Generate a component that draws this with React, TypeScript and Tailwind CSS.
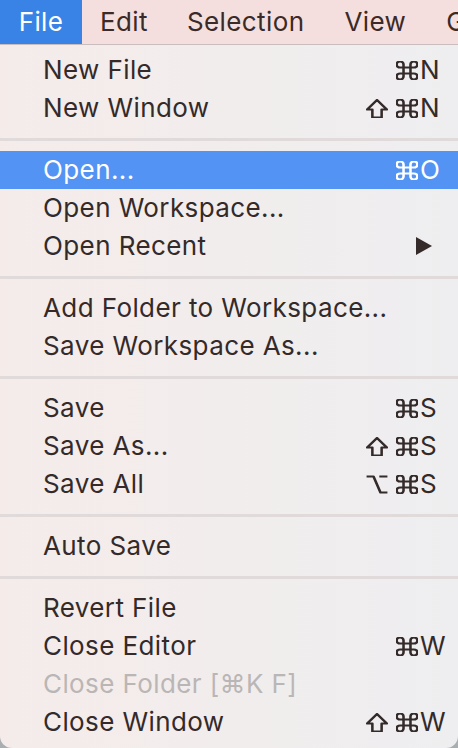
import { ReactNode } from "react"

type Item = {
	label: string
	mods?: string[]
	keyName?: string
	disabled?: boolean
	active?: boolean
	submenu?: boolean
}

const groups: Item[][] = [
	[
		{ label: "New File", mods: ["cmd"], keyName: "N" },
		{ label: "New Window", mods: ["shift", "cmd"], keyName: "N" },
	],
	[
		{ label: "Open...", mods: ["cmd"], keyName: "O", active: true },
		{ label: "Open Workspace..." },
		{ label: "Open Recent", submenu: true },
	],
	[{ label: "Add Folder to Workspace..." }, { label: "Save Workspace As..." }],
	[
		{ label: "Save", mods: ["cmd"], keyName: "S" },
		{ label: "Save As...", mods: ["shift", "cmd"], keyName: "S" },
		{ label: "Save All", mods: ["alt", "cmd"], keyName: "S" },
	],
	[{ label: "Auto Save" }],
	[
		{ label: "Revert File" },
		{ label: "Close Editor", mods: ["cmd"], keyName: "W" },
		{ label: "Close Folder [⌘K F]", disabled: true },
		{ label: "Close Window", mods: ["shift", "cmd"], keyName: "W" },
	],
]

const modPaths: Record<string, string> = {
	cmd: "M18 3a3 3 0 0 0-3 3v12a3 3 0 0 0 3 3 3 3 0 0 0 3-3 3 3 0 0 0-3-3H6a3 3 0 0 0-3 3 3 3 0 0 0 3 3 3 3 0 0 0 3-3V6a3 3 0 0 0-3-3 3 3 0 0 0-3 3 3 3 0 0 0 3 3h12a3 3 0 0 0 3-3 3 3 0 0 0-3-3z",
	shift: "M8 21v-8H3.5L12 3.5 20.5 13H16v8H8z",
	alt: "M3 4h6l6 16h6M14 4h7",
}

function ModIcon({ name }: { name: string }) {
	return (
		<svg width="22" height="19" viewBox="2.5 2.5 19 19" preserveAspectRatio="none" fill="none" stroke="currentColor" strokeWidth="2.2" strokeLinejoin="round">
			<path d={modPaths[name]} />
		</svg>
	)
}

function Shortcut({ mods, keyName }: { mods: string[]; keyName: string }) {
	return (
		<div className="flex items-center">
			<div className="flex items-center gap-[8px]">
				{mods.map((m) => (
					<ModIcon key={m} name={m} />
				))}
			</div>
			<span className="w-[32px] pl-[2px] text-left">{keyName}</span>
		</div>
	)
}

function MenuRow({ item }: { item: Item }) {
	let color = "text-[#332a29]"
	if (item.active) color = "text-white bg-[#5393f3]"
	if (item.disabled) color = "text-[#bab6b5]"
	let right: ReactNode = null
	if (item.mods && item.keyName) right = <Shortcut mods={item.mods} keyName={item.keyName} />
	if (item.submenu)
		right = (
			<svg width="18" height="20" viewBox="0 0 18 20" className="mr-[17px]">
				<path d="M1 1 L17 10 L1 19 Z" fill="#332a29" />
			</svg>
		)
	return (
		<div className={`flex h-[38px] items-center justify-between pl-[43px] pr-[8px] ${color}`}>
			<span>{item.label}</span>
			{right}
		</div>
	)
}

export default function App() {
	return (
		<div className="w-[458px] h-[748px] overflow-hidden bg-[#a9aeb1] font-['Inter',sans-serif] text-[26px] tracking-[0.4px] leading-none">
			<div className="flex h-[45px] items-center overflow-hidden whitespace-nowrap border-b border-[#c9bebd] bg-[#f4dfde] text-[#3b2a27]">
				<div className="flex h-full w-[82px] shrink-0 items-center justify-center bg-[#3983e7] text-white">File</div>
				<div className="ml-[18px] shrink-0">Edit</div>
				<div className="ml-[39px] shrink-0">Selection</div>
				<div className="ml-[40px] shrink-0">View</div>
				<div className="ml-[40px] shrink-0">Go</div>
			</div>
			<div className="flex h-[703px] flex-col rounded-b-[12px] bg-gradient-to-r from-[#f5ecea] to-[#eeeef0] pt-[6px]">
				{groups.map((group, gi) => (
					<div key={gi}>
						{gi > 0 && (
							<div className="flex h-[24px] items-center">
								<div className="h-[3px] w-full bg-[#e0dbda]"></div>
							</div>
						)}
						{group.map((item) => (
							<MenuRow key={item.label} item={item} />
						))}
					</div>
				))}
			</div>
		</div>
	)
}
